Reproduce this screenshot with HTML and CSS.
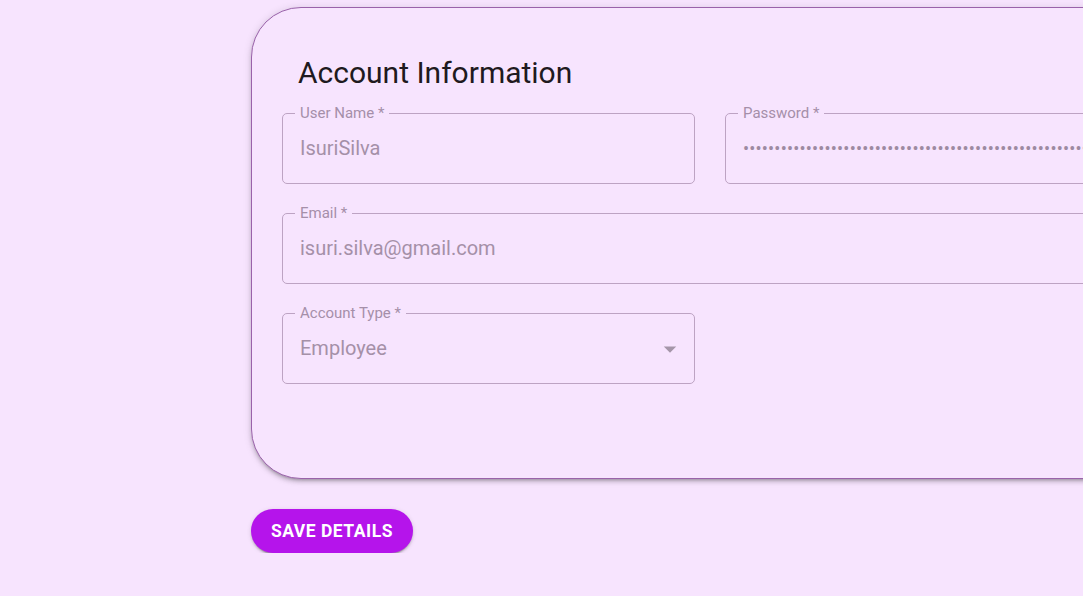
FILE: index.html
```html
<!DOCTYPE html>
<html lang="en">
<head>
<meta charset="utf-8">
<title>Account Information</title>
<link rel="stylesheet" href="styles.css">
</head>
<body>
<main class="page">
  <section class="card">
    <h2 class="card-title">Account Information</h2>
    <div class="form-grid">
      <fieldset class="field">
        <legend class="field-label">User Name *</legend>
        <div class="field-value">IsuriSilva</div>
      </fieldset>
      <fieldset class="field">
        <legend class="field-label">Password *</legend>
        <div class="field-value field-password">••••••••••••••••••••••••••••••••••••••••••••••••••••••••••••••••••••••••••••••••••••••••••••••••</div>
      </fieldset>
      <fieldset class="field field-wide">
        <legend class="field-label">Email *</legend>
        <div class="field-value">isuri.silva@gmail.com</div>
      </fieldset>
      <fieldset class="field field-select">
        <legend class="field-label">Account Type *</legend>
        <div class="field-value select-row">
          <span>Employee</span>
          <svg class="select-arrow" viewBox="0 0 24 24" width="30" height="30" aria-hidden="true"><path d="M7 10l5 5 5-5z"/></svg>
        </div>
      </fieldset>
    </div>
  </section>
  <button class="save-btn" type="button">SAVE DETAILS</button>
</main>
</body>
</html>
```
FILE: styles.css
```css
html, body {
  margin: 0;
  padding: 0;
  background: #f7e4fe;
  overflow: hidden;
  font-family: Roboto, "Liberation Sans", Arial, sans-serif;
}

.page {
  padding: 7px 0 0 251px;
  display: flex;
  flex-direction: column;
  align-items: flex-start;
}

.card {
  box-sizing: border-box;
  width: 920px;
  flex-shrink: 0;
  background: #f7e4fe;
  border: 1px solid #9a62aa;
  border-radius: 50px;
  padding: 47px 30px 94px 30px;
  box-shadow: 0 3px 3px -2px rgba(0,0,0,0.2), 0 3px 4px 0 rgba(0,0,0,0.14), 0 1px 8px 0 rgba(0,0,0,0.12);
}

.card-title {
  margin: 0 0 15px 16px;
  font-size: 30px;
  line-height: 36px;
  font-weight: 400;
  color: #1f1a20;
}

.form-grid {
  display: grid;
  grid-template-columns: 413px 413px;
  column-gap: 30px;
  row-gap: 22px;
}

.field {
  margin: 0;
  min-width: 0;
  border: 1px solid #bda3c3;
  border-radius: 5px;
  padding: 16px 17px 23px 17px;
}

.field-wide {
  grid-column: 1 / span 2;
}

.field-label {
  font-size: 15px;
  line-height: 15px;
  color: #a58fa9;
  padding: 0 5px;
  margin-left: -5px;
}

.field-value {
  font-size: 20px;
  line-height: 23px;
  height: 23px;
  color: #a590a8;
  white-space: nowrap;
  overflow: hidden;
}

.field-password {
  font-size: 18px;
  letter-spacing: 0.2px;
  color: #9d8aa1;
}

.select-row {
  display: flex;
  align-items: center;
  justify-content: space-between;
  overflow: visible;
}

.select-arrow {
  fill: #a596a9;
  margin: -4px -8px -4px 0;
  flex-shrink: 0;
}

.save-btn {
  margin-top: 30px;
  height: 44px;
  padding: 0 20px;
  border: none;
  border-radius: 22px;
  background: #b514eb;
  color: #ffffff;
  font-family: Roboto, "Liberation Sans", Arial, sans-serif;
  font-size: 17.5px;
  font-weight: 700;
  letter-spacing: 0.5px;
  box-shadow: 0 3px 1px -2px rgba(0,0,0,0.2), 0 2px 2px 0 rgba(0,0,0,0.14), 0 1px 5px 0 rgba(0,0,0,0.12);
  cursor: pointer;
}
```
